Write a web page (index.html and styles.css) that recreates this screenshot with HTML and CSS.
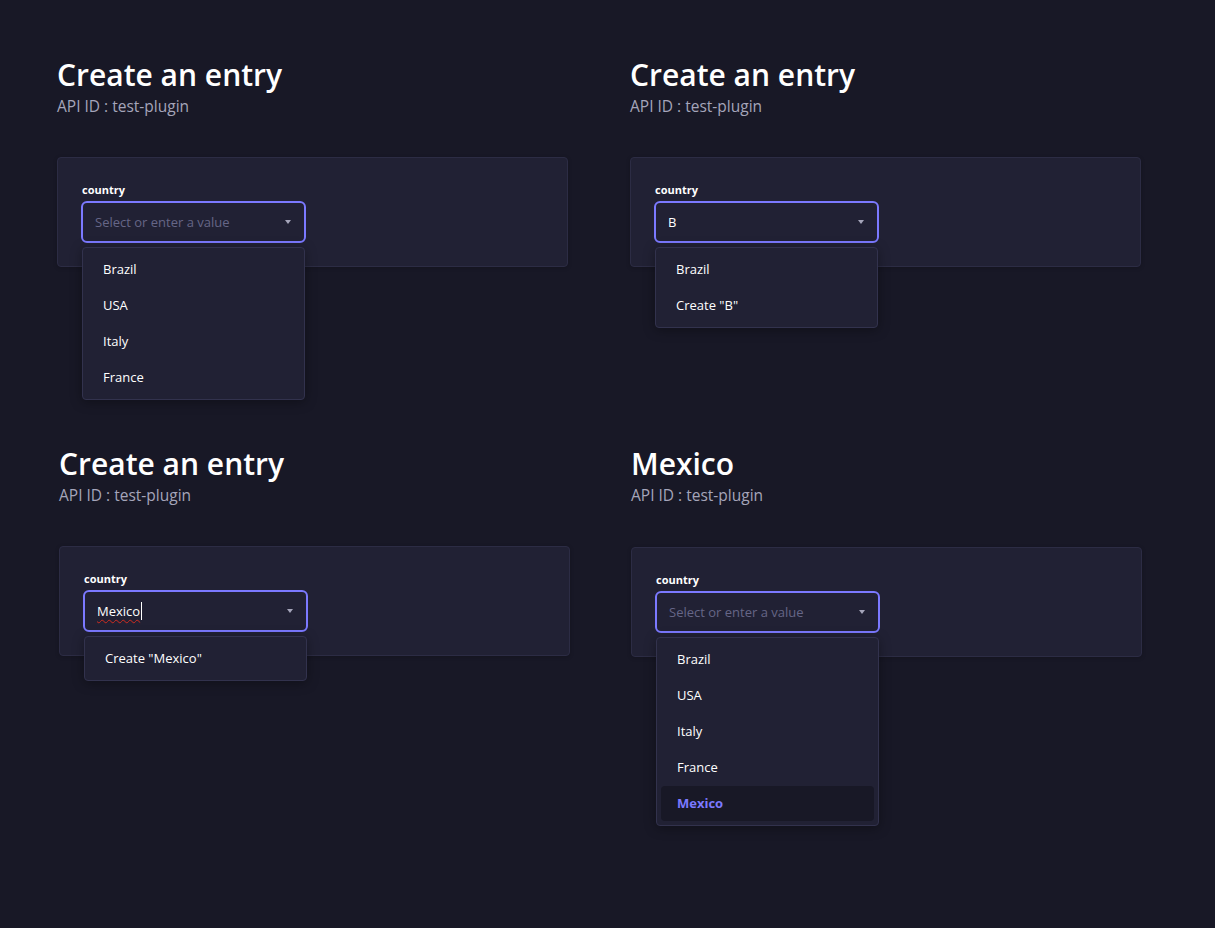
FILE: index.html
```html
<!DOCTYPE html>
<html lang="en">
<head>
  <meta charset="UTF-8" />
  <meta name="viewport" content="width=device-width, initial-scale=1" />
  <title>Create an entry</title>
  <link rel="stylesheet" href="styles.css">
</head>
<body>

  <main class="collage">

    <!-- Empty combobox, menu open -->
    <section class="shot">
      <header class="entry-header">
        <h1 class="entry-title">Create an entry</h1>
        <p class="entry-subtitle">API ID : test-plugin</p>
      </header>
      <div class="entry-panel">
        <label class="field-label">country</label>
        <div class="combobox">
          <div class="combobox-input">
            <span class="placeholder">Select or enter a value</span>
            <span class="caret"></span>
          </div>
          <ul class="combobox-menu">
            <li>Brazil</li>
            <li>USA</li>
            <li>Italy</li>
            <li>France</li>
          </ul>
        </div>
      </div>
    </section>

    <!-- Typing "B" -->
    <section class="shot">
      <header class="entry-header">
        <h1 class="entry-title">Create an entry</h1>
        <p class="entry-subtitle">API ID : test-plugin</p>
      </header>
      <div class="entry-panel">
        <label class="field-label">country</label>
        <div class="combobox">
          <div class="combobox-input">
            <span class="value">B</span>
            <span class="caret"></span>
          </div>
          <ul class="combobox-menu">
            <li>Brazil</li>
            <li>Create "B"</li>
          </ul>
        </div>
      </div>
    </section>

    <!-- Typing a new value -->
    <section class="shot shot--nudge-left">
      <header class="entry-header">
        <h1 class="entry-title">Create an entry</h1>
        <p class="entry-subtitle">API ID : test-plugin</p>
      </header>
      <div class="entry-panel">
        <label class="field-label">country</label>
        <div class="combobox">
          <div class="combobox-input">
            <span class="value value--typing"><span class="misspelled">Mexico</span></span>
            <span class="caret"></span>
          </div>
          <ul class="combobox-menu">
            <li>Create "Mexico"</li>
          </ul>
        </div>
      </div>
    </section>

    <!-- New value created and selected -->
    <section class="shot shot--nudge-down">
      <header class="entry-header">
        <h1 class="entry-title">Mexico</h1>
        <p class="entry-subtitle">API ID : test-plugin</p>
      </header>
      <div class="entry-panel">
        <label class="field-label">country</label>
        <div class="combobox">
          <div class="combobox-input">
            <span class="placeholder">Select or enter a value</span>
            <span class="caret"></span>
          </div>
          <ul class="combobox-menu">
            <li>Brazil</li>
            <li>USA</li>
            <li>Italy</li>
            <li>France</li>
            <li class="selected">Mexico</li>
          </ul>
        </div>
      </div>
    </section>

  </main>

</body>
</html>
```

FILE: styles.css
```css
* {
  box-sizing: border-box;
}
body {
  margin: 0;
  min-height: 100vh;
  background: #181826;
  color: #ffffff;
  font-family: 'Open Sans', 'Noto Sans', sans-serif;
}
.collage {
  display: grid;
  grid-template-columns: 573px 1fr;
  grid-template-rows: 389px auto;
  padding: 56px 0 0 57px;
}
.shot--nudge-left {
  margin-left: 2px;
}
.shot--nudge-down {
  margin-left: 1px;
}
.shot--nudge-down .entry-panel {
  margin-top: 40px;
}
.entry-title {
  margin: 0;
  font-size: 30px;
  line-height: 38px;
  font-weight: 600;
  color: #ffffff;
}
.entry-subtitle {
  margin: 0;
  font-size: 15.5px;
  line-height: 24px;
  color: #a5a5ba;
}
.entry-panel {
  width: 511px;
  margin-top: 39px;
  padding: 24px 24px 23px 24px;
  background: #212134;
  border: 1px solid #2c2c44;
  border-radius: 4px;
  box-shadow: 0 1px 4px rgba(0, 0, 0, 0.2);
}
.field-label {
  display: block;
  margin-bottom: 3px;
  font-size: 11px;
  line-height: 16px;
  font-weight: 700;
  color: #ffffff;
}
.combobox {
  position: relative;
  width: 225px;
  margin-left: -1px;
}
.combobox-input {
  display: flex;
  align-items: center;
  justify-content: space-between;
  height: 42px;
  padding: 0 12px 0 12px;
  border: 2.5px solid #7b79ff;
  border-radius: 6px;
  background: #212134;
  font-size: 13px;
}
.placeholder {
  color: #666687;
}
.value {
  color: #ffffff;
}
.value--typing {
  border-right: 1px solid #ffffff;
  padding-right: 1px;
}
.misspelled {
  text-decoration: underline wavy #d02b20;
  text-decoration-thickness: 1px;
  text-underline-offset: 3px;
}
.caret {
  width: 0;
  height: 0;
  margin-right: 1px;
  border-left: 3.5px solid transparent;
  border-right: 3.5px solid transparent;
  border-top: 4px solid #a5a5ba;
}
/* dropdown list */
.combobox-menu {
  position: absolute;
  top: calc(100% + 4px);
  left: 1px;
  width: 223px;
  margin: 0;
  padding: 3px 4px 4px;
  list-style: none;
  background: #212134;
  border: 1px solid #32324d;
  border-radius: 4px;
  box-shadow: 0 2px 12px rgba(0, 0, 0, 0.35);
  z-index: 2;
}
.combobox-menu li {
  height: 36px;
  line-height: 36px;
  padding: 0 16px;
  font-size: 13px;
  font-weight: 500;
  color: #ffffff;
  border-radius: 4px;
}
.combobox-menu li.selected {
  height: 35px;
  line-height: 35px;
  margin-top: 1px;
  background: #181826;
  color: #7b79ff;
  font-weight: 700;
}
```
